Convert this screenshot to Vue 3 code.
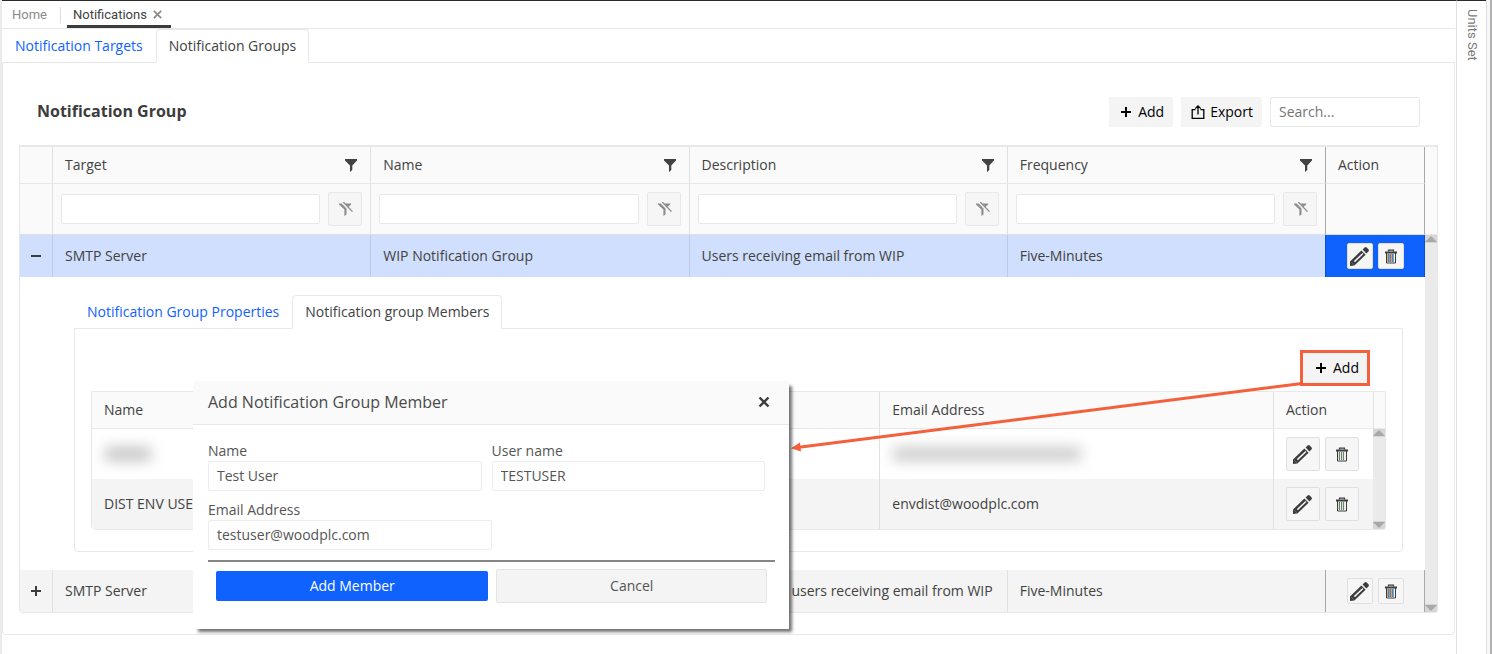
<script setup>
import { ref } from 'vue'

const columns = ['Target', 'Name', 'Description', 'Frequency']
const form = ref({ name: 'Test User', user: 'TESTUSER', email: 'testuser@woodplc.com' })
</script>

<template>
  <div class="page">
    <svg class="symbols" aria-hidden="true">
      <symbol id="funnel" viewBox="0 0 12 13"><path d="M0 0h12v1.4L7.3 6.6V11L5 13V6.6L0 1.4z" fill="currentColor" /></symbol>
      <symbol id="funnel-off" viewBox="0 0 14 14">
        <path d="M0 1.4h2.6l4.9 5v6L5.4 14V7.6L0 2.6z" fill="currentColor" />
        <path d="M6 1.4h6.2v1.2L9.4 5z" fill="currentColor" />
        <path d="M4.2 0 13.5 9.6" stroke="currentColor" stroke-width="1.3" fill="none" />
      </symbol>
      <symbol id="pencil" viewBox="0 0 19 19">
        <path d="M0 19v-4.6L11.4 3.6l4.2 4.2L4.4 18.4z" fill="#3c3c3c" />
        <path d="m12.6 2.5 2-1.9q1-1 2.100 0l1.700 1.700q1 1.100 0 2.100l-2 2z" fill="#3c3c3c" />
        <path d="M4.400 14.600 12.900 6.500" stroke="#f4f4f4" stroke-width="1.500" />
        <path d="M1.400 15.200l2.600 2.600" stroke="#8a8a8a" stroke-width="0.600" />
      </symbol>
      <symbol id="trash" viewBox="0 0 12 15">
        <path d="M0 2.500h12v2H0z" fill="#3c3c3c" />
        <path d="M3.500 2.500V1.100h5v1.400" fill="none" stroke="#3c3c3c" stroke-width="1.200" />
        <path d="M1.500 4h9v10h-9z" fill="#f4f4f4" stroke="#3c3c3c" stroke-width="1" />
        <path d="M4.500 5v8M8.500 5v8" class="slat-b" stroke-width="1" />
        <path d="M2.500 5v8M6.500 5v8" class="slat-a" stroke-width="1" />
        <path d="M3.500 5v8M5.500 5v8M7.500 5v8" stroke="#555c63" stroke-width="0.800" />
      </symbol>
      <symbol id="plus" viewBox="0 0 12 12"><path d="M6 1v10M1 6h10" stroke="currentColor" stroke-width="2" /></symbol>
    </svg>

    <main class="main">
      <nav class="topbar">
        <a class="top-link" href="#">Home</a>
        <div class="top-tab">
          <a href="#">Notifications</a>
          <button class="plain" aria-label="Close tab">
            <svg width="9" height="9" viewBox="0 0 9 9"><path d="M.8.800l7.400 7.400M8.200.800.800 8.200" stroke="#8a8a8a" stroke-width="1.700" /></svg>
          </button>
        </div>
      </nav>

      <div class="tabs">
        <button class="tab">Notification Targets</button>
        <button class="tab active">Notification Groups</button>
      </div>
      <section class="panel outer">
        <header class="toolbar">
          <h1>Notification Group</h1>
          <button class="tool"><svg width="12" height="12"><use href="#plus" /></svg>Add</button>
          <button class="tool export">
            <svg width="14" height="14" viewBox="0 0 14 14" fill="none" stroke="#000" stroke-width="1.300"><path d="M4.500 4.700H1.200v8.600h11.600V4.700H9.500M7 9.500V1M4.200 3.600 7 .900l2.800 2.700" /></svg>Export
          </button>
          <input class="search" type="text" placeholder="Search..." aria-label="Search">
        </header>

        <div class="grid groups">
          <table>
            <colgroup><col class="c-toggle"><col><col><col><col><col class="c-action"></colgroup>
            <thead>
              <tr>
                <th></th>
                <th v-for="c in columns" :key="c">
                  <div class="head"><span>{{ c }}</span><svg width="12" height="13"><use href="#funnel" /></svg></div>
                </th>
                <th class="pinned">Action</th>
              </tr>
              <tr class="filters">
                <td></td>
                <td v-for="c in columns" :key="c">
                  <div class="filter">
                    <input type="text" :aria-label="'Filter ' + c">
                    <button :aria-label="'Clear filter ' + c"><svg width="14" height="14"><use href="#funnel-off" /></svg></button>
                  </div>
                </td>
                <td class="pinned"></td>
              </tr>
            </thead>
            <tbody>
              <tr class="row selected">
                <td class="toggle"><button class="plain" aria-label="Collapse"><svg width="12" height="12" viewBox="0 0 12 12"><path d="M1 7h10" stroke="#3c3c3c" stroke-width="2" /></svg></button></td>
                <td>SMTP Server</td>
                <td>WIP Notification Group</td>
                <td>Users receiving email from WIP</td>
                <td>Five-Minutes</td>
                <td class="pinned">
                  <div class="actions small">
                    <button aria-label="Edit"><svg width="19" height="19"><use href="#pencil" /></svg></button>
                    <button aria-label="Delete"><svg width="12" height="15"><use href="#trash" /></svg></button>
                  </div>
                </td>
              </tr>
              <tr class="detail">
                <td colspan="6">
                  <div class="tabs">
                    <button class="tab">Notification Group Properties</button>
                    <button class="tab active">Notification group Members</button>
                  </div>
                  <section class="panel inner">
                    <header class="toolbar">
                      <button class="tool marked"><svg width="12" height="12"><use href="#plus" /></svg>Add</button>
                    </header>
                    <div class="grid members">
                      <table>
                        <colgroup><col><col><col><col class="c-action"></colgroup>
                        <thead>
                          <tr><th>Name</th><th></th><th>Email Address</th><th>Action</th></tr>
                        </thead>
                        <tbody>
                          <tr>
                            <td><div class="redacted short"></div></td>
                            <td></td>
                            <td><div class="redacted long"></div></td>
                            <td>
                              <div class="actions">
                                <button aria-label="Edit"><svg width="19" height="19"><use href="#pencil" /></svg></button>
                                <button aria-label="Delete"><svg width="12" height="15"><use href="#trash" /></svg></button>
                              </div>
                            </td>
                          </tr>
                          <tr class="alt">
                            <td>DIST ENV USER</td>
                            <td></td>
                            <td>envdist@woodplc.com</td>
                            <td>
                              <div class="actions">
                                <button aria-label="Edit"><svg width="19" height="19"><use href="#pencil" /></svg></button>
                                <button aria-label="Delete"><svg width="12" height="15"><use href="#trash" /></svg></button>
                              </div>
                            </td>
                          </tr>
                        </tbody>
                      </table>
                      <div class="gutter"><div class="gutter-head"></div><div class="track"><i class="up"></i><i class="down"></i></div></div>
                    </div>
                  </section>
                </td>
              </tr>
              <tr class="row alt">
                <td class="toggle"><button class="plain" aria-label="Expand"><svg width="12" height="12" viewBox="0 0 12 12"><path d="M1 7h10M6 2v10" stroke="#3c3c3c" stroke-width="2" /></svg></button></td>
                <td>SMTP Server</td>
                <td></td>
                <td class="continued">users receiving email from WIP</td>
                <td>Five-Minutes</td>
                <td class="pinned">
                  <div class="actions small">
                    <button aria-label="Edit"><svg width="19" height="19"><use href="#pencil" /></svg></button>
                    <button aria-label="Delete"><svg width="12" height="15"><use href="#trash" /></svg></button>
                  </div>
                </td>
              </tr>
            </tbody>
          </table>
          <div class="gutter"><div class="gutter-head"></div><div class="track"><i class="up"></i><i class="down"></i></div></div>
        </div>
      </section>
    </main>

    <aside class="side"><button class="plain">Units Set</button></aside>
    <div class="edge"></div>

    <svg class="arrow" width="520" height="76" viewBox="0 0 520 76">
      <path d="M511 3.500 8 67.200" stroke="#f4603c" stroke-width="3" />
      <path d="M0 68.300 9 62.500l1 9z" fill="#f4603c" />
    </svg>

    <form class="dialog" role="dialog" aria-labelledby="dialog-title" @submit.prevent>
      <header>
        <h2 id="dialog-title">Add Notification Group Member</h2>
        <button type="button" class="plain" aria-label="Close">
          <svg width="12" height="12" viewBox="0 0 12 12"><path d="m1.500 1.500 9 9M10.500 1.500l-9 9" stroke="#3c3c3c" stroke-width="2.400" /></svg>
        </button>
      </header>
      <div class="body">
        <div class="pair">
          <div class="field"><label for="f-name">Name</label><input id="f-name" v-model="form.name" type="text"></div>
          <div class="field"><label for="f-user">User name</label><input id="f-user" v-model="form.user" type="text"></div>
        </div>
        <div class="field email"><label for="f-email">Email Address</label><input id="f-email" v-model="form.email" type="text"></div>
        <div class="buttons">
          <button type="submit" class="primary">Add Member</button>
          <button type="button" class="cancel">Cancel</button>
        </div>
      </div>
    </form>
  </div>
</template>

<style>
body { background: #fff; }
</style>

<style scoped>
* { box-sizing: border-box; }
.page {
  position: relative;
  display: flex;
  min-height: 100vh;
  border-left: 2px solid #ebebeb;
  font: 14px/20px "Open Sans", sans-serif;
  color: #424242;
  background: #fff;
}
button, input { font: inherit; color: inherit; margin: 0; }
button { cursor: pointer; }
svg { display: block; flex: none; }
.symbols { position: absolute; width: 0; height: 0; }
.plain { padding: 0; border: 0; background: none; }

.main { flex: 1; min-width: 0; border-top: 1px solid #2b2b2b; padding-right: 1px; }
.topbar {
  display: flex;
  align-items: center;
  height: 28px;
  border-bottom: 1px solid #e8e8e8;
  font: 13px/16px Roboto, sans-serif;
}
.topbar a { color: inherit; text-decoration: none; }
.topbar .top-link { padding: 0 13px 0 10px; border-right: 1px solid #ddd; color: #8a8a8a; }
.top-tab {
  display: flex;
  align-items: center;
  gap: 6px;
  height: 27px;
  margin-left: 6px;
  padding: 3px 9px 0 6px;
  border-bottom: 3px solid #3c3c3c;
}

.tabs { display: flex; height: 33px; position: relative; }
.tab { padding: 0 12px; border: 1px solid transparent; background: none; color: #0f62fe; white-space: nowrap; }
.tab.active {
  height: 34px;
  border-color: #e8e8e8;
  border-bottom-color: #fff;
  border-radius: 4px 4px 0 0;
  background: #fff;
  color: #424242;
}
.panel { border: 1px solid #e8e8e8; border-radius: 0 0 4px 4px; }
.outer { padding: 34px 16px 21px; }
.inner { padding: 24px 16px 21px; }

.toolbar { display: flex; align-items: center; gap: 8px; padding: 0 18px; margin-bottom: 18px; }
.inner .toolbar { justify-content: flex-end; margin-bottom: 8px; padding-right: 19px; }
h1 { flex: 1; margin: 0; padding-bottom: 2px; font-size: 16px; line-height: 24px; font-weight: 700; color: #3c3c3c; }
.tool {
  display: flex;
  align-items: center;
  gap: 6px;
  height: 30px;
  padding: 0 9px 0 11px;
  border: 0;
  border-radius: 2px;
  background: #f4f4f4;
  color: #000;
}
.tool.export { gap: 5px; padding: 0 9px 0 10px; }
.tool.marked { padding: 0 8px 0 12px; border-radius: 0; outline: 3px solid #f4603c; }
.search { width: 150px; height: 30px; padding: 0 8px 2px; border: 1px solid #e8e8e8; border-radius: 2px; background: #fff; }
.search::placeholder { color: #757575; opacity: 1; }

.grid { display: flex; border: 1px solid #e8e8e8; border-radius: 0 0 4px 4px; }
.groups { border-top-width: 2px; }
table { flex: 1; min-width: 0; width: 100%; table-layout: fixed; border-spacing: 0; }
.c-toggle { width: 32px; }
.c-action { width: 100px; }
th, td { padding: 0 12px; text-align: left; font-weight: 400; border-left: 1px solid #e0e0e0; white-space: nowrap; }
th:first-child, td:first-child { border-left: 0; }
th { height: 37px; background: #fafafa; border-bottom: 1px solid #e8e8e8; }
.members tbody td { height: 50px; }
.head { display: flex; align-items: center; justify-content: space-between; padding-right: 1px; }
.filters td { height: 51px; padding: 0 8px; background: #fafafa; border-bottom: 1px solid #e0e0e0; }
.filter { display: flex; align-items: center; gap: 8px; }
.filter input { flex: 1; min-width: 0; height: 30px; padding: 0 8px; border: 1px solid #e8e8e8; border-radius: 2px; background: #fff; }
.filter button {
  display: grid;
  place-items: center;
  width: 34px;
  height: 34px;
  padding: 0 0 0 2px;
  border: 1px solid #e8e8e8;
  border-radius: 2px;
  background: #f6f6f6;
  color: #8c8c8c;
}
.row > td { height: 42px; }
.row > .toggle { padding: 0 10px; }
.selected > td { background: #d0dffd; border-left-color: #bccbea; }
.alt > td { background: #f4f4f4; }
.groups .pinned { border-left-color: #a8a8a8; border-right: 1px solid #a8a8a8; }
.groups .selected > .pinned { background: #0f62fe; border-color: #0c4fcb; }
.row > .continued { padding-left: 102px; padding-right: 0; }
.detail > td { padding: 18px 22px 18px 54px; }

.actions { display: flex; gap: 5px; }
.actions button {
  display: grid;
  place-items: center;
  width: 34px;
  height: 34px;
  padding: 0 1px 0 0;
  border: 1px solid #e0e0e0;
  border-radius: 2px;
  background: #f6f6f6;
  --slat-a: #c9ecc2;
  --slat-b: #dff3da;
}
.slat-a { stroke: var(--slat-a); }
.slat-b { stroke: var(--slat-b); }
.small { justify-content: center; }
.row > .pinned { padding: 0 9px 0 10px; }
.actions.small button { width: 26px; height: 26px; --slat-a: #d9a673; --slat-b: #5fa8ea; }

.redacted { height: 14px; border-radius: 6px; filter: blur(7px); }
.short { width: 48px; background: #c4c4c4; }
.long { width: 190px; background: #cccccc; }

.gutter { display: flex; flex-direction: column; width: 12px; }
.gutter-head { height: 37px; background: #fafafa; border-bottom: 1px solid #e8e8e8; }
.groups > .gutter > .gutter-head { height: 88px; }
.members .gutter-head { border-left: 1px solid #e0e0e0; }
.track { flex: 1; display: flex; flex-direction: column; justify-content: space-between; background: #eaeaea; }
.track i { display: grid; place-items: center; height: 8px; background: #d6d6d6; }
.track i::before { content: ""; border: 6px solid transparent; border-top-width: 0; border-bottom-color: #a8a8a8; }
.track .down::before { border-width: 6px 6px 0; border-top-color: #a8a8a8; }

.side {
  width: 30px;
  padding: 8px 7px;
  border-top: 1px solid #2b2b2b;
  border-left: 1px solid #e0e0e0;
}
.side button { writing-mode: vertical-rl; font: 13px/16px Roboto, sans-serif; color: #7a7a7a; }
.edge { width: 6px; border-left: 1px solid #dedede; border-right: 2px solid #b0b0b0; background: #f8f8f8; }

.arrow { position: absolute; left: 789px; top: 380px; }

.dialog {
  position: absolute;
  left: 191px;
  top: 381px;
  width: 596px;
  background: #fff;
  color: #555;
  box-shadow: 4px 4px 3px -1px rgba(0, 0, 0, 0.55);
}
.dialog header {
  display: flex;
  align-items: center;
  justify-content: space-between;
  height: 44px;
  padding: 0 19px 2px 15px;
  background: #fafafa;
  border-bottom: 1px solid #e8e8e8;
}
h2 { margin: 0; font-size: 16px; line-height: 24px; font-weight: 400; color: #4a4a4a; }
.body { padding: 16px 14px 26px 15px; }
.pair { display: flex; gap: 10px; padding-right: 10px; margin-bottom: 10px; }
.field { flex: 1; min-width: 0; }
.field label { display: block; }
.field input { display: block; width: 100%; height: 30px; padding: 0 8px 2px; border: 1px solid #ececec; border-radius: 2px; background: #fff; }
.field.email { width: 50%; margin-top: -1px; }
.buttons {
  display: flex;
  align-items: center;
  gap: 8px;
  margin-top: 10px;
  padding: 7px 8px 0;
  border-top: 2px solid #858585;
}
.buttons button { padding: 0; border-radius: 2px; }
.buttons .primary { flex: 274; height: 30px; border: 0; background: #0f62fe; color: #fff; }
.buttons .cancel { flex: 270; height: 34px; border: 1px solid #e4e4e4; background: #f4f4f4; }
</style>
